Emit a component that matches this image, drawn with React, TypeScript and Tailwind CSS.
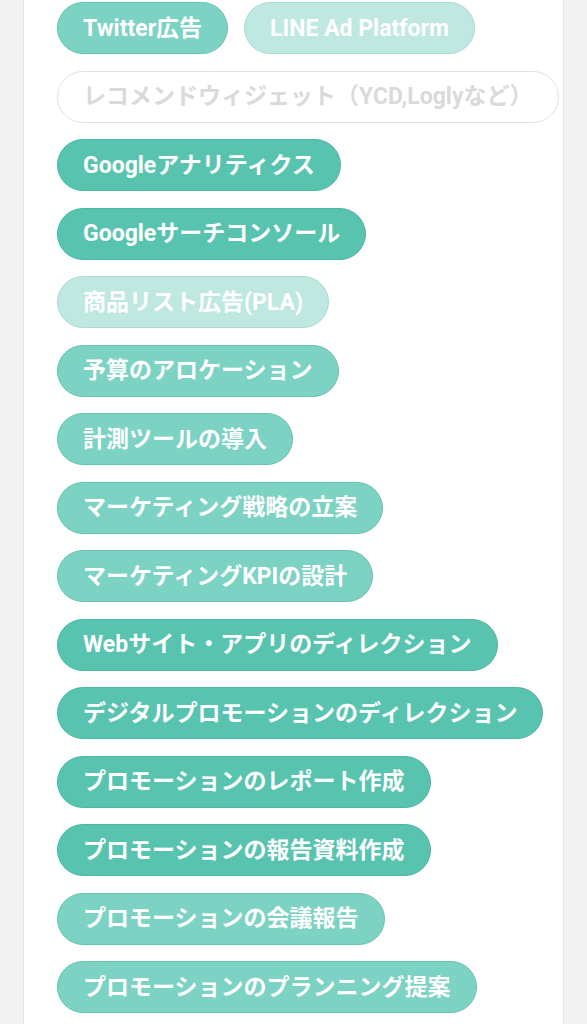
import React from 'react';

type Tone = 'dark' | 'mid' | 'light' | 'off';

interface Tag {
  label: string;
  tone: Tone;
}

const tags: Tag[] = [
  { label: 'Twitter広告', tone: 'mid' },
  { label: 'LINE Ad Platform', tone: 'light' },
  { label: 'レコメンドウィジェット（YCD,Loglyなど）', tone: 'off' },
  { label: 'Googleアナリティクス', tone: 'dark' },
  { label: 'Googleサーチコンソール', tone: 'dark' },
  { label: '商品リスト広告(PLA)', tone: 'light' },
  { label: '予算のアロケーション', tone: 'mid' },
  { label: '計測ツールの導入', tone: 'mid' },
  { label: 'マーケティング戦略の立案', tone: 'mid' },
  { label: 'マーケティングKPIの設計', tone: 'mid' },
  { label: 'Webサイト・アプリのディレクション', tone: 'dark' },
  { label: 'デジタルプロモーションのディレクション', tone: 'dark' },
  { label: 'プロモーションのレポート作成', tone: 'dark' },
  { label: 'プロモーションの報告資料作成', tone: 'dark' },
  { label: 'プロモーションの会議報告', tone: 'mid' },
  { label: 'プロモーションのプランニング提案', tone: 'mid' },
];

const toneClass: Record<Tone, string> = {
  dark: 'bg-[#58c4b0] border-[#4cb7a2] text-white',
  mid: 'bg-[#7cd2c3] border-[#69c3b2] text-white',
  light: 'bg-[#bfe8e1] border-[#a6dcd2] text-white',
  off: 'bg-white border-[#e2e2e2] text-[#dadada]',
};

function TagPill({ tag }: { tag: Tag }) {
  return (
    <span
      className={`inline-flex items-center h-[52px] px-[25px] rounded-full border text-[23px] font-bold leading-none whitespace-nowrap ${toneClass[tag.tone]}`}
    >
      {tag.label}
    </span>
  );
}

export default function App() {
  return (
    <div
      className="min-h-screen bg-[#f3f3f3] px-[23px]"
      style={{ fontFamily: 'Roboto, "Noto Sans CJK JP", sans-serif' }}
    >
      <div className="min-h-screen bg-white border-x border-[#e5e5e5] pl-[33px] pr-[6px] pt-[2px] pb-4">
        <div className="flex flex-wrap gap-x-4 gap-y-[16.5px]">
          {tags.map(t => (
            <TagPill key={t.label} tag={t} />
          ))}
        </div>
      </div>
    </div>
  );
}
